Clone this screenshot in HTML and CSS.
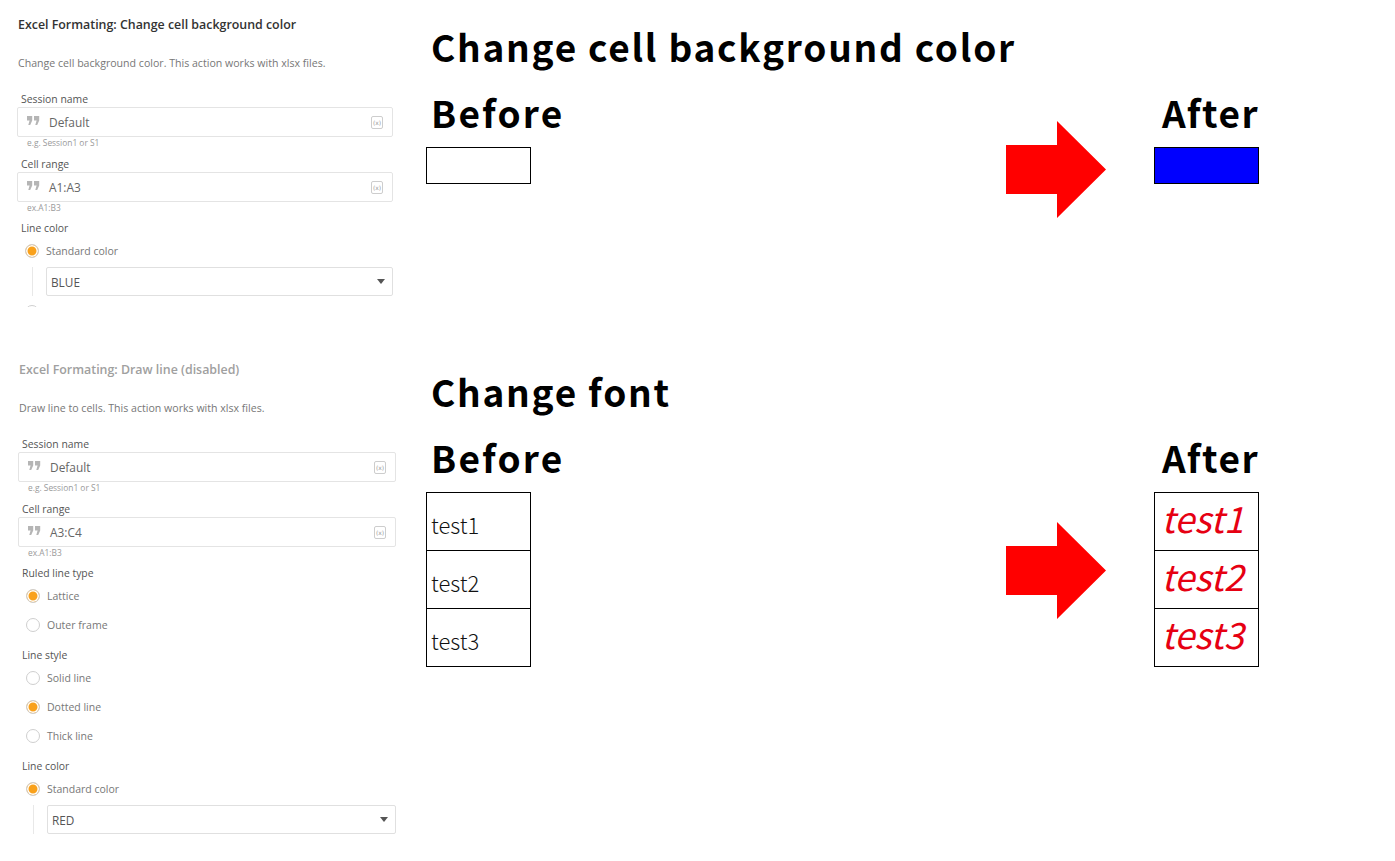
FILE: index.html
```html
<!DOCTYPE html>
<html lang="en">
<head>
<meta charset="utf-8">
<title>Excel Formating</title>
<link rel="stylesheet" href="styles.css">
</head>
<body>
<main class="page">
  <section class="row">
    <div class="panel panel-clip">
      <h2 class="ptitle">Excel Formating: Change cell background color</h2>
      <p class="pdesc">Change cell background color. This action works with xlsx files.</p>
      <div class="field field-first">
        <label class="flabel">Session name</label>
        <div class="input">
          <svg class="quote" viewBox="0 0 13 9"><path d="M0 0h5.2v4.6L3.2 9H1.3l1.3-4.4H0z M7 0h5.2v4.6L10.2 9H8.3l1.3-4.4H7z"/></svg>
          <span class="ival">Default</span>
          <span class="varbtn">(x)</span>
        </div>
        <div class="hint">e.g. Session1 or S1</div>
      </div>
      <div class="field">
        <label class="flabel">Cell range</label>
        <div class="input">
          <svg class="quote" viewBox="0 0 13 9"><path d="M0 0h5.2v4.6L3.2 9H1.3l1.3-4.4H0z M7 0h5.2v4.6L10.2 9H8.3l1.3-4.4H7z"/></svg>
          <span class="ival">A1:A3</span>
          <span class="varbtn">(x)</span>
        </div>
        <div class="hint">ex.A1:B3</div>
      </div>
      <div class="group">
        <div class="glabel">Line color</div>
        <div class="radios">
          <div class="radio"><span class="dot dot-on"></span><span class="rtext">Standard color</span></div>
        </div>
        <div class="selgroup">
          <div class="select"><span class="sval">BLUE</span><span class="caret"></span></div>
        </div>
        <div class="radios">
          <div class="radio"><span class="dot"></span></div>
        </div>
      </div>
    </div>
    <div class="demo">
      <h1 class="dtitle">Change cell background color</h1>
      <div class="compare">
        <div class="col">
          <h2 class="dlabel">Before</h2>
          <div class="cellbox"></div>
        </div>
        <div class="spacer"></div>
        <svg class="arrow arrow-top" viewBox="0 0 100 97"><polygon points="0,24 51,24 51,0 100,48.5 51,97 51,73 0,73"/></svg>
        <div class="col col-after">
          <h2 class="dlabel dlabel-after">After</h2>
          <div class="cellbox cellbox-blue"></div>
        </div>
      </div>
    </div>
  </section>

  <section class="row row-font">
    <div class="panel panel-wide">
      <h2 class="ptitle ptitle-disabled">Excel Formating: Draw line (disabled)</h2>
      <p class="pdesc">Draw line to cells. This action works with xlsx files.</p>
      <div class="field field-first">
        <label class="flabel">Session name</label>
        <div class="input">
          <svg class="quote" viewBox="0 0 13 9"><path d="M0 0h5.2v4.6L3.2 9H1.3l1.3-4.4H0z M7 0h5.2v4.6L10.2 9H8.3l1.3-4.4H7z"/></svg>
          <span class="ival">Default</span>
          <span class="varbtn">(x)</span>
        </div>
        <div class="hint">e.g. Session1 or S1</div>
      </div>
      <div class="field">
        <label class="flabel">Cell range</label>
        <div class="input">
          <svg class="quote" viewBox="0 0 13 9"><path d="M0 0h5.2v4.6L3.2 9H1.3l1.3-4.4H0z M7 0h5.2v4.6L10.2 9H8.3l1.3-4.4H7z"/></svg>
          <span class="ival">A3:C4</span>
          <span class="varbtn">(x)</span>
        </div>
        <div class="hint">ex.A1:B3</div>
      </div>
      <div class="group">
        <div class="glabel">Ruled line type</div>
        <div class="radios">
          <div class="radio"><span class="dot dot-on"></span><span class="rtext">Lattice</span></div>
          <div class="radio"><span class="dot"></span><span class="rtext">Outer frame</span></div>
        </div>
      </div>
      <div class="group group-next">
        <div class="glabel">Line style</div>
        <div class="radios">
          <div class="radio"><span class="dot"></span><span class="rtext">Solid line</span></div>
          <div class="radio"><span class="dot dot-on"></span><span class="rtext">Dotted line</span></div>
          <div class="radio"><span class="dot"></span><span class="rtext">Thick line</span></div>
        </div>
      </div>
      <div class="group group-next">
        <div class="glabel">Line color</div>
        <div class="radios">
          <div class="radio"><span class="dot dot-on"></span><span class="rtext">Standard color</span></div>
        </div>
        <div class="selgroup">
          <div class="select"><span class="sval">RED</span><span class="caret"></span></div>
        </div>
      </div>
    </div>
    <div class="demo">
      <h1 class="dtitle">Change font</h1>
      <div class="compare">
        <div class="col">
          <h2 class="dlabel">Before</h2>
          <div class="tbl">
            <div class="trow">test1</div>
            <div class="trow">test2</div>
            <div class="trow">test3</div>
          </div>
        </div>
        <div class="spacer"></div>
        <svg class="arrow arrow-font" viewBox="0 0 100 97"><polygon points="0,24 51,24 51,0 100,48.5 51,97 51,73 0,73"/></svg>
        <div class="col col-after">
          <h2 class="dlabel dlabel-after">After</h2>
          <div class="tbl tbl-after">
            <div class="trow">test1</div>
            <div class="trow">test2</div>
            <div class="trow">test3</div>
          </div>
        </div>
      </div>
    </div>
  </section>
</main>
</body>
</html>
```

FILE: styles.css
```css
* { box-sizing: border-box; margin: 0; padding: 0; }
body { margin: 0; background: #fff; font-family: "Open Sans", Lato, sans-serif; }
.page { width: 1395px; height: 861px; overflow: hidden; }

.row { display: grid; grid-template-columns: 426px 833px; height: 345px; }
.row-font { height: 516px; }

/* ---------- left form panels ---------- */
.panel { padding-left: 17px; width: 393px; }
.panel-clip { height: 307px; overflow: hidden; }
.panel-wide { padding-left: 18px; width: 396px; }

.ptitle { margin-top: 17px; font-size: 12.4px; line-height: 16px; font-weight: 600; color: #333; padding-left: 1px; }
.ptitle-disabled { color: #a0a0a0; }
.pdesc { margin-top: 23px; font-size: 10.6px; line-height: 14px; color: #777; padding-left: 1px; }

.field { margin-top: 8px; }
.field-first { margin-top: 22px; }
.flabel { display: block; font-size: 10.4px; line-height: 14px; color: #555; padding-left: 4px; margin-bottom: 1px; }
.input { height: 30px; border: 1px solid #e4e4e4; border-radius: 2px; display: flex; align-items: center; padding: 0 9px; }
.quote { width: 13px; height: 9px; flex: none; fill: #b5b5b5; margin-top: -3px; }
.ival { margin-left: 9px; font-size: 11.9px; color: #666; flex: 1; }
.varbtn { flex: none; width: 12px; height: 13px; border: 1px solid #cdcdcd; border-radius: 2px; color: #9a9a9a; font-size: 6px; line-height: 11px; text-align: center; font-family: "DejaVu Sans", sans-serif; }
.hint { font-size: 8.4px; line-height: 12px; color: #9a9a9a; padding-left: 10px; }

.group { margin-top: 7px; }
.group-next { margin-top: 9px; }
.glabel { font-size: 10.4px; line-height: 14px; color: #555; padding-left: 4px; }
.radios { margin-top: 1px; }
.radio { display: flex; align-items: center; height: 29px; padding-left: 8px; }
.dot { width: 14px; height: 14px; border: 1px solid #cfcfcf; border-radius: 50%; background: #fff; flex: none; }
.dot-on { background: #f9a11b; box-shadow: inset 0 0 0 1.5px #fff; }
.rtext { margin-left: 7px; font-size: 10.5px; color: #777; }

.selgroup { margin-top: 2px; margin-left: 15px; border-left: 1px solid #e8e8e8; padding-left: 13px; }
.select { height: 29px; border: 1px solid #e0e0e0; border-radius: 2px; display: flex; align-items: center; padding: 0 7px 0 4px; }
.sval { flex: 1; font-size: 11.8px; color: #555; }
.caret { width: 0; height: 0; border-left: 4.5px solid transparent; border-right: 4.5px solid transparent; border-top: 5px solid #555; }

/* ---------- right demo ---------- */
.demo { font-family: "Noto Sans CJK JP", "Noto Sans", sans-serif; color: #000; }
.dtitle { margin-top: 24px; font-size: 37px; line-height: 44px; font-weight: 700; padding-left: 5px; white-space: nowrap; letter-spacing: 1.75px; }
.compare { margin-top: 22px; display: flex; align-items: flex-start; }
.col { width: 105px; flex: none; }
.col-after { margin-left: 48px; }
.spacer { flex: 1; }
.dlabel { font-size: 37px; line-height: 44px; font-weight: 700; white-space: nowrap; padding-left: 5px; margin-bottom: 13px; letter-spacing: 2.2px; }
.dlabel-after { padding-left: 8px; letter-spacing: 1.5px; }
.cellbox { width: 105px; height: 37px; border: 1px solid #000; }
.cellbox-blue { background: #0000ff; }

.arrow { width: 100px; height: 97px; flex: none; fill: #ff0000; }
.arrow-top { margin-top: 31px; }
.arrow-font { margin-top: 87px; }

.tbl { width: 105px; border: 1px solid #000; }
.trow { height: 57px; padding: 6px 0 0 4px; font-size: 22px; line-height: 51px; font-weight: 300; color: #111; }
.trow + .trow { height: 58px; border-top: 1px solid #000; }
.tbl-after .trow { padding: 0 8px 8px 0; text-align: center; font-size: 36px; line-height: 49px; font-style: italic; font-weight: 400; color: #e60012; }
```
